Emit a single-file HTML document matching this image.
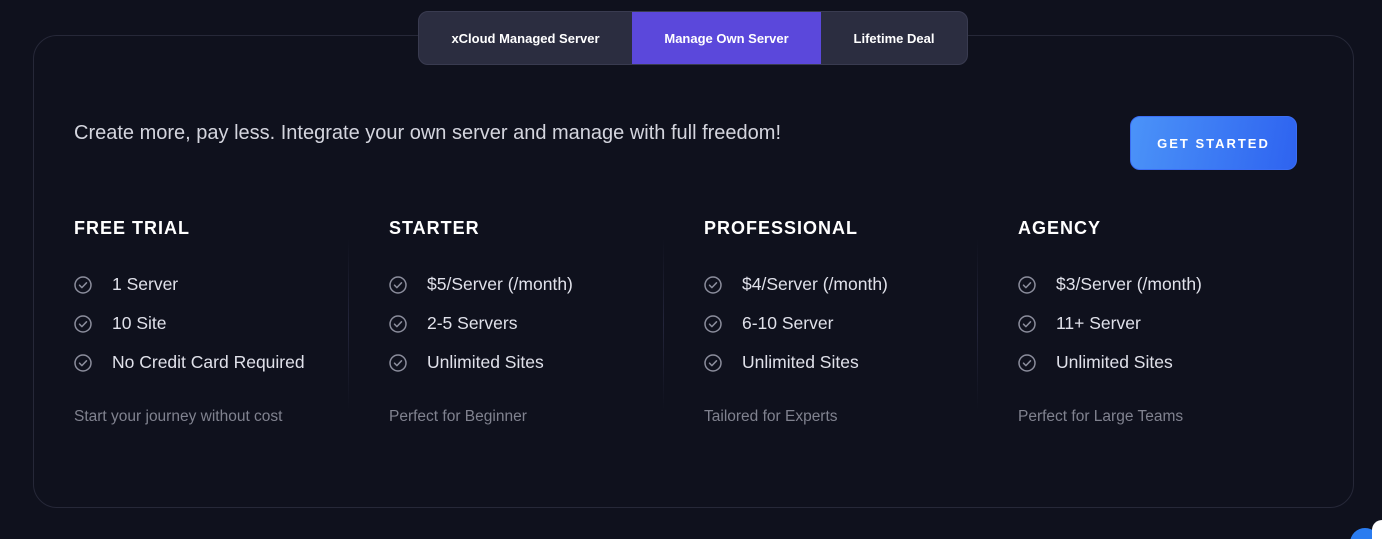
<!DOCTYPE html>
<html><head><style>
*{margin:0;padding:0;box-sizing:border-box}
html,body{width:1382px;height:539px;overflow:hidden}
body{background:#0f111d;font-family:"Liberation Sans",sans-serif;position:relative;color:#e6e7ee}
.card{position:absolute;left:33px;top:35px;width:1321px;height:473px;border:1px solid #262838;border-radius:24px}
.tabs{position:absolute;left:418px;top:11px;width:550px;height:54px;background:#2b2d40;border:1px solid #393b50;border-radius:10px;display:flex;overflow:hidden;font-weight:bold;font-size:13px;color:#fff}
.tabs div{display:flex;align-items:center;justify-content:center}
.t1{width:213px}.t2{width:189px;background:#5b48db}.t3{flex:1}
.lead{position:absolute;left:74px;top:122px;font-size:20px;color:#d4d5de}
.btn{position:absolute;left:1130px;top:116px;width:167px;height:54px;border-radius:10px;background:linear-gradient(100deg,#4b93f8,#2e63f0);border:1px solid #3b6ef5;color:#fff;font-weight:bold;font-size:13px;letter-spacing:2px;display:flex;align-items:center;justify-content:center}
.col{position:absolute;top:218px}
.col h3{font-size:18px;letter-spacing:1px;font-weight:bold;color:#fff;margin-bottom:26px}
.it{display:flex;align-items:center;height:39px;font-size:17.5px;color:#e0e1ea}
.it svg{margin-right:20px}
.sub{margin-top:26px;font-size:15.5px;color:#80828f}
.div{position:absolute;top:238px;width:1px;height:172px;background:linear-gradient(#0f111d,#23253a,#0f111d)}
.dot{position:absolute;left:1350px;top:528px;width:30px;height:30px;border-radius:50%;background:#2a7cf0}
.w{position:absolute;left:1372px;top:520px;width:20px;height:30px;background:#fff;border-radius:10px 0 0 0}
</style></head><body>
<div class="card"></div>
<div class="tabs"><div class="t1">xCloud Managed Server</div><div class="t2">Manage Own Server</div><div class="t3">Lifetime Deal</div></div>
<div class="lead">Create more, pay less. Integrate your own server and manage with full freedom!</div>
<div class="btn">GET STARTED</div>
<div class="div" style="left:348px"></div><div class="div" style="left:663px"></div><div class="div" style="left:977px"></div>
<svg width="0" height="0" style="position:absolute"><defs><g id="ck"><circle cx="9" cy="9" r="8" fill="none" stroke="#8b8d9c" stroke-width="1.5"/><path d="M5.5 9.2l2.4 2.4 4.6-4.8" fill="none" stroke="#8b8d9c" stroke-width="1.5" stroke-linecap="round" stroke-linejoin="round"/></g></defs></svg>
<div class="col" style="left:74px"><h3>FREE TRIAL</h3>
<div class="it"><svg width="18" height="18"><use href="#ck"/></svg>1 Server</div>
<div class="it"><svg width="18" height="18"><use href="#ck"/></svg>10 Site</div>
<div class="it"><svg width="18" height="18"><use href="#ck"/></svg>No Credit Card Required</div>
<div class="sub">Start your journey without cost</div></div>
<div class="col" style="left:389px"><h3>STARTER</h3>
<div class="it"><svg width="18" height="18"><use href="#ck"/></svg>$5/Server (/month)</div>
<div class="it"><svg width="18" height="18"><use href="#ck"/></svg>2-5 Servers</div>
<div class="it"><svg width="18" height="18"><use href="#ck"/></svg>Unlimited Sites</div>
<div class="sub">Perfect for Beginner</div></div>
<div class="col" style="left:704px"><h3>PROFESSIONAL</h3>
<div class="it"><svg width="18" height="18"><use href="#ck"/></svg>$4/Server (/month)</div>
<div class="it"><svg width="18" height="18"><use href="#ck"/></svg>6-10 Server</div>
<div class="it"><svg width="18" height="18"><use href="#ck"/></svg>Unlimited Sites</div>
<div class="sub">Tailored for Experts</div></div>
<div class="col" style="left:1018px"><h3>AGENCY</h3>
<div class="it"><svg width="18" height="18"><use href="#ck"/></svg>$3/Server (/month)</div>
<div class="it"><svg width="18" height="18"><use href="#ck"/></svg>11+ Server</div>
<div class="it"><svg width="18" height="18"><use href="#ck"/></svg>Unlimited Sites</div>
<div class="sub">Perfect for Large Teams</div></div>
<div class="dot"></div><div class="w"></div>
</body></html>
